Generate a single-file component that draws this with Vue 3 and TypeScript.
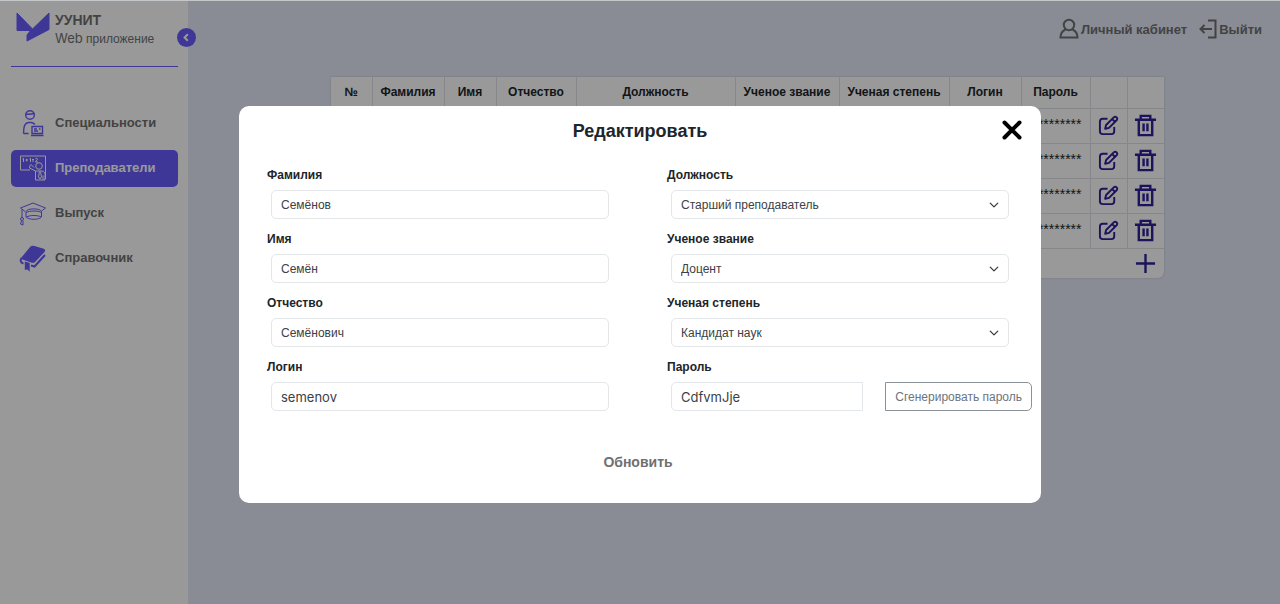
<script setup lang="ts">
import { ref } from 'vue'

interface NavItem {
  id: string
  title: string
}

const nav: NavItem[] = [
  { id: 'specialties', title: 'Специальности' },
  { id: 'teachers', title: 'Преподаватели' },
  { id: 'graduates', title: 'Выпуск' },
  { id: 'reference', title: 'Справочник' },
]
const active = ref('teachers')

const columns: string[] = [
  '№', 'Фамилия', 'Имя', 'Отчество', 'Должность', 'Ученое звание', 'Ученая степень', 'Логин', 'Пароль',
]
const masks: string[] = ['*********', '*********', '*********', '*********']

const form = ref({
  surname: 'Семёнов',
  name: 'Семён',
  patronymic: 'Семёнович',
  login: 'semenov',
  position: 'Старший преподаватель',
  rank: 'Доцент',
  degree: 'Кандидат наук',
  password: 'CdfvmJje',
})
const open = ref(true)
</script>

<template>
  <div class="page">
    <aside class="sidebar">
      <div class="brand">
        <svg class="logo" viewBox="0 0 34 32" aria-hidden="true">
          <path d="M1 2 L16.500 18 L33 2 V18.500 L11 30 V24 L14.500 19.500 H1 Z" />
        </svg>
        <div class="brand-text">
          <strong>УУНИТ</strong>
          <span><span class="latin">Web</span> приложение</span>
        </div>
        <button class="collapse" type="button" aria-label="Свернуть">
          <svg viewBox="0 0 19 19"><path d="M10.800 6.300 L7.600 9.500 L10.800 12.700" /></svg>
        </button>
      </div>
      <nav class="menu">
        <a
          v-for="item in nav"
          :key="item.id"
          href="#"
          class="menu-link"
          :class="{ active: item.id === active }"
          @click.prevent="active = item.id"
        >
          <svg v-if="item.id === 'specialties'" class="menu-icon" viewBox="0 0 28 28">
            <circle cx="11" cy="6" r="4.300" />
            <path d="M7 5 C10 5.500 13 5 15.500 4.500 M4.500 24.500 H9.500 M4.500 24.500 C4.500 17 6 13.500 9.500 13.500 H12 C14 13.500 15 14.500 16 15.500" />
            <path d="M13 17.500 H23.500 V24.500 H13 Z M15 20 H18 M20 20 H21.500 M15 22 H19 M12 26.500 H24.500" />
          </svg>
          <svg v-else-if="item.id === 'teachers'" class="menu-icon thin" viewBox="0 0 28 28">
            <path d="M11 16 H1.500 V2 H26.500 V25" />
            <path d="M3.500 5 L4.500 4.300 V8 M6.500 6 H9 M7.700 4.800 V7.300 M10.500 5 L11.500 4.300 V8 M13 5.500 H15 M13 7 H15 M16.500 5 C16.500 4 18.500 4 18.500 5.200 L16.500 8 H19" />
            <circle cx="20" cy="12" r="3.300" />
            <path d="M16.500 17 H23 C25 17.500 26 18.500 26 20.500 V26 M16.500 17 L10.500 14 Q10.500 11.500 12 10.500 L15 13.500 M16.500 17 V26 H26 M20.500 17.500 L19.500 23 L21 25 L22.500 23 L21.500 17.500 M24 21.500 V26" />
          </svg>
          <svg v-else-if="item.id === 'graduates'" class="menu-icon thin" viewBox="0 0 28 28">
            <path d="M1.500 9 L14 4 L26.500 9 L22.500 12 M6 12.500 L1.500 9 M7 12.500 C8 9 21.500 9 22.500 12.500 V18 C20 21 10 21 7 18 Z M7 13.500 C11 11.500 19 11.500 22.500 13.500 M7.500 18 C11 16 19 16 22 18 M3 10.500 V19" />
            <circle cx="3" cy="20" r="1.500" />
            <path d="M2.500 22 L1.500 25 L4 26 L4 22" />
          </svg>
          <svg v-else class="menu-icon book" viewBox="0 0 28 28">
            <path class="solid" d="M2.500 14.500 L12 3 Q13 2 14.500 2.500 L24.500 5.500 Q26 6 25 7.500 L15.500 17.500 Q14.500 18.500 13 18 Z" />
            <path class="pages" d="M2.500 14 C1 16.500 1.500 18.500 4.500 19.500 M12 21.500 L15.500 22.500 L26 11" />
            <path class="solid" d="M6.500 18.500 L10 19.500 V26 L8.500 24.500 L6.500 25 Z" />
          </svg>
          <span>{{ item.title }}</span>
        </a>
      </nav>
    </aside>

    <main class="main">
      <header class="topbar">
        <a href="#" class="top-link">
          <svg class="user-icon" viewBox="0 0 20 22">
            <circle cx="10" cy="7" r="5.200" />
            <path d="M6.500 11.500 C3 13 1.500 15.500 1.500 19.500 H18.500 C18.500 15.500 17 13 13.500 11.500" />
          </svg>
          <span>Личный кабинет</span>
        </a>
        <a href="#" class="top-link">
          <svg class="exit-icon" viewBox="0 0 18 22">
            <path d="M9 2.500 H16.500 V19.500 H9 M13 11 H1.500 M5.500 7 L1.500 11 L5.500 15" />
          </svg>
          <span>Выйти</span>
        </a>
      </header>

      <section class="table-card">
        <table>
          <colgroup>
            <col class="c-num" /><col class="c-surname" /><col class="c-name" /><col class="c-patr" />
            <col class="c-pos" /><col class="c-rank" /><col class="c-degree" /><col class="c-login" />
            <col class="c-pass" /><col class="c-act" /><col class="c-act" />
          </colgroup>
          <thead>
            <tr>
              <th v-for="c in columns" :key="c" scope="col">{{ c }}</th>
              <td></td>
              <td></td>
            </tr>
          </thead>
          <tbody>
            <tr v-for="(mask, i) in masks" :key="i">
              <td v-for="n in 8" :key="n"></td>
              <td class="mask">{{ mask }}</td>
              <td>
                <button class="icon-btn" type="button" aria-label="Изменить">
                  <svg class="edit" viewBox="0 0 22 22">
                    <path d="M10 4 H5 Q2 4 2 7 V17 Q2 20 5 20 H14 Q17 20 17 17 V12.500" />
                    <path d="M7.500 14.500 L8.500 10.500 L16.500 2.500 Q18 1.200 19.500 2.500 Q20.800 4 19.500 5.500 L11.500 13.500 Z M15 4.500 L17.500 7" />
                  </svg>
                </button>
              </td>
              <td>
                <button class="icon-btn" type="button" aria-label="Удалить">
                  <svg class="trash" viewBox="0 0 24 24">
                    <path d="M1 6 H23 M7 6 V2 H17 V6 M5 6 V22 H19 V6 M10 10 V18 M14 10 V18" />
                  </svg>
                </button>
              </td>
            </tr>
          </tbody>
          <tfoot>
            <tr>
              <td colspan="10"></td>
              <td>
                <button class="icon-btn" type="button" aria-label="Добавить">
                  <svg class="plus" viewBox="0 0 22 22"><path d="M11 1 V21 M1 11 H21" /></svg>
                </button>
              </td>
            </tr>
          </tfoot>
        </table>
      </section>
    </main>

    <div v-if="open" class="overlay">
      <form class="dialog" role="dialog" aria-labelledby="dialog-title" @submit.prevent>
        <div class="dialog-head">
          <h2 id="dialog-title">Редактировать</h2>
          <button class="close" type="button" aria-label="Закрыть" @click="open = false">
            <svg viewBox="0 0 20 20"><path d="M2.500 2.500 L17.500 17.500 M17.500 2.500 L2.500 17.500" /></svg>
          </button>
        </div>
        <div class="fields">
          <div class="field">
            <label for="surname">Фамилия</label>
            <input id="surname" v-model="form.surname" type="text" />
          </div>
          <div class="field">
            <label for="position">Должность</label>
            <select id="position" v-model="form.position">
              <option>Старший преподаватель</option>
            </select>
          </div>
          <div class="field">
            <label for="name">Имя</label>
            <input id="name" v-model="form.name" type="text" />
          </div>
          <div class="field">
            <label for="rank">Ученое звание</label>
            <select id="rank" v-model="form.rank">
              <option>Доцент</option>
            </select>
          </div>
          <div class="field">
            <label for="patronymic">Отчество</label>
            <input id="patronymic" v-model="form.patronymic" type="text" />
          </div>
          <div class="field">
            <label for="degree">Ученая степень</label>
            <select id="degree" v-model="form.degree">
              <option>Кандидат наук</option>
            </select>
          </div>
          <div class="field">
            <label for="login">Логин</label>
            <input id="login" v-model="form.login" class="latin" type="text" />
          </div>
          <div class="field">
            <label for="password">Пароль</label>
            <div class="password-row">
              <input id="password" v-model="form.password" class="latin" type="text" />
              <button class="generate" type="button">Сгенерировать пароль</button>
            </div>
          </div>
        </div>
        <button class="submit" type="submit">Обновить</button>
      </form>
    </div>
  </div>
</template>

<style>
body {
  margin: 0;
}
</style>

<style scoped>
.page {
  display: flex;
  min-height: 100vh;
  background: #e4e9f7;
  color: #212529;
  font-family: 'Liberation Sans', Arial, sans-serif;
  font-size: 12px;
}
.page *,
.page *::before {
  box-sizing: border-box;
}
svg {
  display: block;
  flex: none;
  fill: none;
  stroke: currentColor;
}
a {
  color: inherit;
  text-decoration: none;
}
button {
  font-family: inherit;
  cursor: pointer;
}

/* sidebar */
.sidebar {
  flex: none;
  width: 188px;
  padding: 11px 10px 11px 11px;
  background: #fff;
  color: #707070;
}
.brand {
  position: relative;
  display: flex;
  gap: 5px;
  height: 56px;
  padding-left: 5px;
  border-bottom: 1px solid #695cfe;
}
.logo {
  width: 34px;
  height: 32px;
}
.logo path {
  fill: #695cfe;
  stroke: #695cfe;
  stroke-linejoin: round;
}
.brand-text {
  display: flex;
  flex-direction: column;
  font-size: 12px;
  line-height: 18px;
}
.brand-text strong {
  font-size: 14px;
}
.latin {
  font-family: Inter, 'Liberation Sans', sans-serif;
  font-size: 13px;
}
.collapse {
  position: absolute;
  top: 17px;
  right: -18px;
  width: 19px;
  height: 19px;
  padding: 0;
  border: 0;
  border-radius: 50%;
  background: #695cfe;
  color: #fff;
}
.collapse svg {
  stroke-width: 2;
}
.menu {
  display: flex;
  flex-direction: column;
  gap: 8px;
  margin-top: 38px;
}
.menu-link {
  display: flex;
  align-items: center;
  gap: 8px;
  height: 37px;
  padding: 0 0 2px 8px;
  border-radius: 5px;
  font-size: 13px;
  font-weight: bold;
}
.menu-link.active {
  background: #695cfe;
  color: #fff;
}
.menu-icon {
  width: 28px;
  height: 28px;
  color: #695cfe;
  stroke-width: 1.4;
}
.menu-icon.thin {
  stroke-width: 1;
}
.menu-icon .solid {
  fill: currentColor;
}
.menu-icon .pages {
  stroke-width: 2;
}
.active .menu-icon {
  color: #fff;
}

/* main area */
.main {
  flex: 1;
  min-width: 0;
}
.topbar {
  display: flex;
  justify-content: flex-end;
  gap: 12px;
  height: 77px;
  padding: 18px 18px 0 0;
  color: #707070;
  font-size: 13px;
  font-weight: bold;
}
.top-link {
  display: flex;
  align-items: center;
  gap: 2px;
  height: 22px;
}
.user-icon {
  width: 20px;
  height: 22px;
  stroke-width: 2;
}
.exit-icon {
  width: 18px;
  height: 22px;
  stroke-width: 2;
}
.table-card {
  margin: 0 116px 0 143px;
  border-radius: 0 0 6px 6px;
  background: #fff;
  box-shadow: 0 0 2px #b4b9c6;
}
table {
  width: 100%;
  table-layout: fixed;
  border-collapse: collapse;
}
.c-num { width: 41px; }
.c-surname { width: 72px; }
.c-name { width: 52px; }
.c-patr { width: 80px; }
.c-rank { width: 104px; }
.c-degree { width: 110px; }
.c-login { width: 72px; }
.c-pass { width: 69px; }
.c-act { width: 37px; }
th,
td {
  height: 35px;
  padding: 0;
  border-right: 1px solid #dee2e6;
  border-bottom: 1px solid #dee2e6;
}
th,
thead td {
  height: 31px;
  font-size: 12px;
  white-space: nowrap;
}
tr > :last-child {
  border-right: 0;
}
tfoot td {
  height: 30px;
  border: 0;
}
.mask {
  padding: 7px 8px 0 0;
  font-size: 14px;
  text-align: right;
  vertical-align: top;
}
.icon-btn {
  display: block;
  margin: 0 auto;
  padding: 0;
  border: 0;
  background: none;
  color: #30209a;
}
.edit {
  width: 21px;
  height: 21px;
  stroke-width: 2;
  stroke-linejoin: round;
}
.trash {
  width: 23px;
  height: 23px;
  stroke-width: 2.5;
}
.plus {
  width: 21px;
  height: 21px;
  stroke-width: 2.5;
}

/* dialog */
.overlay {
  position: fixed;
  inset: 0;
  padding: 105px 16px 16px;
  border-top: 1px solid #c3c7c9;
  background: rgba(0, 0, 0, 0.4);
  background-clip: padding-box;
  overflow: auto;
}
.dialog {
  max-width: 802px;
  margin: 0 auto;
  padding: 10px 32px 27px 28px;
  border-radius: 10px;
  background: #fff;
}
.dialog-head {
  position: relative;
  display: flex;
  justify-content: center;
  margin: 0 -4px 19px 0;
}
h2 {
  margin: 0;
  font-size: 18px;
  line-height: 30px;
}
.close {
  position: absolute;
  top: 4px;
  right: -9px;
  width: 20px;
  height: 20px;
  padding: 0;
  border: 0;
  background: none;
  color: #000;
}
.close svg {
  stroke-width: 4;
  stroke-linecap: round;
}
.fields {
  display: grid;
  grid-template-columns: 1fr 1fr;
  gap: 10px 58px;
}
.field {
  display: flex;
  flex-direction: column;
  gap: 5px;
  min-width: 0;
}
label {
  font-size: 12px;
  font-weight: bold;
  line-height: 20px;
}
input,
select {
  min-width: 0;
  height: 29px;
  margin: 0 0 0 4px;
  padding: 0 9px;
  border: 1px solid #e3e7ea;
  border-radius: 5px;
  background-color: #fff;
  color: #3c4146;
  font-family: inherit;
  font-size: 12px;
}
input.latin {
  font-family: Inter, 'Liberation Sans', sans-serif;
  font-size: 13px;
}
select {
  appearance: none;
  background-image: url("data:image/svg+xml,%3Csvg xmlns='http://www.w3.org/2000/svg' viewBox='0 0 16 16'%3E%3Cpath fill='none' stroke='%23343a40' stroke-width='2' stroke-linecap='round' stroke-linejoin='round' d='m2 5 6 6 6-6'/%3E%3C/svg%3E");
  background-repeat: no-repeat;
  background-position: right 9px center;
  background-size: 10px 10px;
}
.password-row {
  display: flex;
  gap: 22px;
  margin-right: -23px;
}
.password-row input {
  flex: 1;
  border-radius: 5px 0 0 5px;
}
.generate {
  flex: none;
  height: 29px;
  padding: 0 9px;
  border: 1px solid #8b9298;
  border-radius: 0 5px 5px 0;
  background: #fff;
  color: #6c757d;
  font-size: 12px;
}
.submit {
  display: block;
  margin: 37px auto 0;
  padding: 0 16px;
  border: 0;
  background: none;
  color: #707070;
  font-size: 14px;
  font-weight: bold;
  line-height: 28px;
}
</style>
